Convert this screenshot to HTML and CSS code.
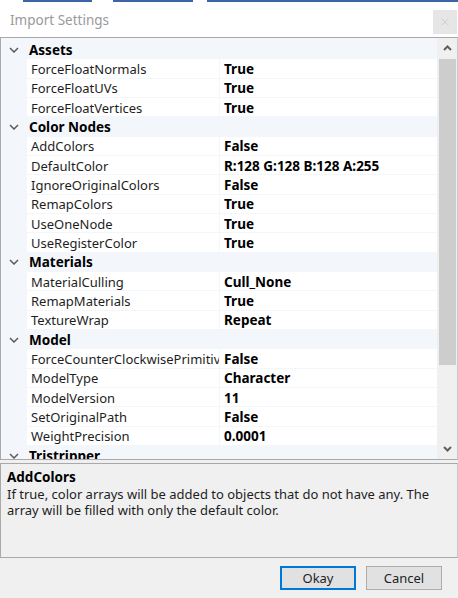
FILE: index.html
```html
<!DOCTYPE html>
<html>
<head>
<meta charset="utf-8">
<link rel="stylesheet" href="styles.css">
</head>
<body>
<div class="window">
  <div class="topstrip">
    <span class="seg seg1"></span><span class="seg seg2"></span><span class="seg seg3"></span>
  </div>
  <div class="titlebar">
    <span class="title">Import Settings</span>
    <span class="close"><svg width="8" height="8" viewBox="0 0 8 8"><path d="M0.5 0.5L7.5 7.5M7.5 0.5L0.5 7.5" stroke="#cfcfcf" stroke-width="1"/></svg></span>
  </div>
  <div class="grid">
    <div class="rows">
      <div class="cat"><svg class="chev" width="10" height="6" viewBox="0 0 10 6"><path d="M1 1L5 5L9 1" fill="none" stroke="#5a5a5a" stroke-width="1.5"/></svg><span>Assets</span></div>
      <div class="prop"><span class="name">ForceFloatNormals</span><span class="val">True</span></div>
      <div class="prop"><span class="name">ForceFloatUVs</span><span class="val">True</span></div>
      <div class="prop"><span class="name">ForceFloatVertices</span><span class="val">True</span></div>
      <div class="cat"><svg class="chev" width="10" height="6" viewBox="0 0 10 6"><path d="M1 1L5 5L9 1" fill="none" stroke="#5a5a5a" stroke-width="1.5"/></svg><span>Color Nodes</span></div>
      <div class="prop"><span class="name">AddColors</span><span class="val">False</span></div>
      <div class="prop"><span class="name">DefaultColor</span><span class="val">R:128 G:128 B:128 A:255</span></div>
      <div class="prop"><span class="name">IgnoreOriginalColors</span><span class="val">False</span></div>
      <div class="prop"><span class="name">RemapColors</span><span class="val">True</span></div>
      <div class="prop"><span class="name">UseOneNode</span><span class="val">True</span></div>
      <div class="prop"><span class="name">UseRegisterColor</span><span class="val">True</span></div>
      <div class="cat"><svg class="chev" width="10" height="6" viewBox="0 0 10 6"><path d="M1 1L5 5L9 1" fill="none" stroke="#5a5a5a" stroke-width="1.5"/></svg><span>Materials</span></div>
      <div class="prop"><span class="name">MaterialCulling</span><span class="val">Cull_None</span></div>
      <div class="prop"><span class="name">RemapMaterials</span><span class="val">True</span></div>
      <div class="prop"><span class="name">TextureWrap</span><span class="val">Repeat</span></div>
      <div class="cat"><svg class="chev" width="10" height="6" viewBox="0 0 10 6"><path d="M1 1L5 5L9 1" fill="none" stroke="#5a5a5a" stroke-width="1.5"/></svg><span>Model</span></div>
      <div class="prop"><span class="name">ForceCounterClockwisePrimitives</span><span class="val">False</span></div>
      <div class="prop"><span class="name">ModelType</span><span class="val">Character</span></div>
      <div class="prop"><span class="name">ModelVersion</span><span class="val">11</span></div>
      <div class="prop"><span class="name">SetOriginalPath</span><span class="val">False</span></div>
      <div class="prop"><span class="name">WeightPrecision</span><span class="val">0.0001</span></div>
      <div class="cat"><svg class="chev" width="10" height="6" viewBox="0 0 10 6"><path d="M1 1L5 5L9 1" fill="none" stroke="#5a5a5a" stroke-width="1.5"/></svg><span>Tristripper</span></div>
    </div>
    <div class="scrollbar">
      <div class="sbtn"><svg width="9" height="6" viewBox="0 0 9 6"><path d="M1 5L4.5 1.5L8 5" fill="none" stroke="#606060" stroke-width="2"/></svg></div>
      <div class="track"><div class="thumb"></div></div>
      <div class="sbtn"><svg width="9" height="6" viewBox="0 0 9 6"><path d="M1 1L4.5 4.5L8 1" fill="none" stroke="#606060" stroke-width="2"/></svg></div>
    </div>
  </div>
  <div class="desc">
    <div class="desc-title">AddColors</div>
    <div class="desc-text">If true, color arrays will be added to objects that do not have any. The array will be filled with only the default color.</div>
  </div>
  <div class="buttons">
    <button class="btn btn-default">Okay</button>
    <button class="btn">Cancel</button>
  </div>
</div>
</body>
</html>
```
FILE: styles.css
```css
html, body {
  margin: 0;
  padding: 0;
}
body {
  width: 458px;
  height: 598px;
  overflow: hidden;
  background: #f0f0f0;
  font-family: "Noto Sans", "Open Sans", sans-serif;
  font-size: 13px;
  color: #1e1e1e;
}
.window {
  display: flex;
  flex-direction: column;
  height: 598px;
}
.topstrip {
  height: 2px;
  background: #ffffff;
  display: flex;
}
.seg {
  height: 2px;
  background: #3c64a8;
}
.seg1 { margin-left: 23px; width: 69px; }
.seg2 { margin-left: 21px; width: 80px; }
.seg3 { margin-left: 14px; flex: 1; }
.titlebar {
  height: 35px;
  background: #ffffff;
  display: flex;
  align-items: flex-start;
  justify-content: space-between;
}
.title {
  margin-left: 10px;
  margin-top: 8px;
  font-size: 13.5px;
  color: #9a9a9a;
  line-height: 20px;
}
.close {
  margin-top: 8px;
  margin-right: 1px;
  width: 24px;
  height: 24px;
  background: #e6e6e6;
  display: flex;
  align-items: center;
  justify-content: center;
}
.grid {
  height: 421px;
  border: 1px solid #a9a9a9;
  border-right-color: #c8c8c8;
  display: flex;
  background: #f3f6fb;
  overflow: hidden;
}
.rows {
  flex: 1;
  padding-top: 2px;
  overflow: hidden;
}
.cat, .prop {
  height: 18.33px;
  margin-bottom: 1px;
  display: flex;
  align-items: center;
  white-space: nowrap;
}
.cat {
  font-weight: 700;
  font-size: 13.5px;
  color: #000;
  padding-top: 1px;
  box-sizing: border-box;
}
.chev {
  margin-left: 8px;
  margin-right: 10px;
}
.prop .name {
  margin-left: 26px;
  width: 188px;
  padding-left: 4px;
  padding-top: 1px;
  box-sizing: content-box;
  height: calc(100% - 1px);
  background: #ffffff;
  display: flex;
  align-items: center;
  overflow: hidden;
}
.prop .val {
  margin-left: 1px;
  flex: 1;
  padding-left: 4px;
  padding-top: 1px;
  height: calc(100% - 1px);
  background: #ffffff;
  display: flex;
  align-items: center;
  font-weight: 700;
  font-size: 13.5px;
  color: #000;
}
.scrollbar {
  width: 20px;
  background: #f0f0f0;
  display: flex;
  flex-direction: column;
}
.sbtn {
  height: 20px;
  display: flex;
  align-items: center;
  justify-content: center;
}
.track {
  flex: 1;
  padding-top: 1px;
}
.thumb {
  margin: 0 1px 0 2px;
  height: 306px;
  background: #cdcdcd;
}
.desc {
  margin-top: 3px;
  height: 88px;
  border: 1px solid #a9a9a9;
  border-right-color: #c8c8c8;
  padding: 5px 6px 0 6px;
  line-height: 16.5px;
  color: #1e1e1e;
}
.desc-title {
  font-weight: 700;
  font-size: 13.5px;
  color: #000;
}
.buttons {
  display: flex;
  justify-content: flex-end;
  gap: 10px;
  margin-top: 8px;
  margin-right: 16px;
}
.btn {
  width: 76px;
  height: 24px;
  background: #e1e1e1;
  border: 1px solid #adadad;
  font-family: "Noto Sans", "Open Sans", sans-serif;
  font-size: 13px;
  color: #1e1e1e;
  padding: 0;
  margin: 0;
}
.btn-default {
  border: 2px solid #0078d7;
}
```
